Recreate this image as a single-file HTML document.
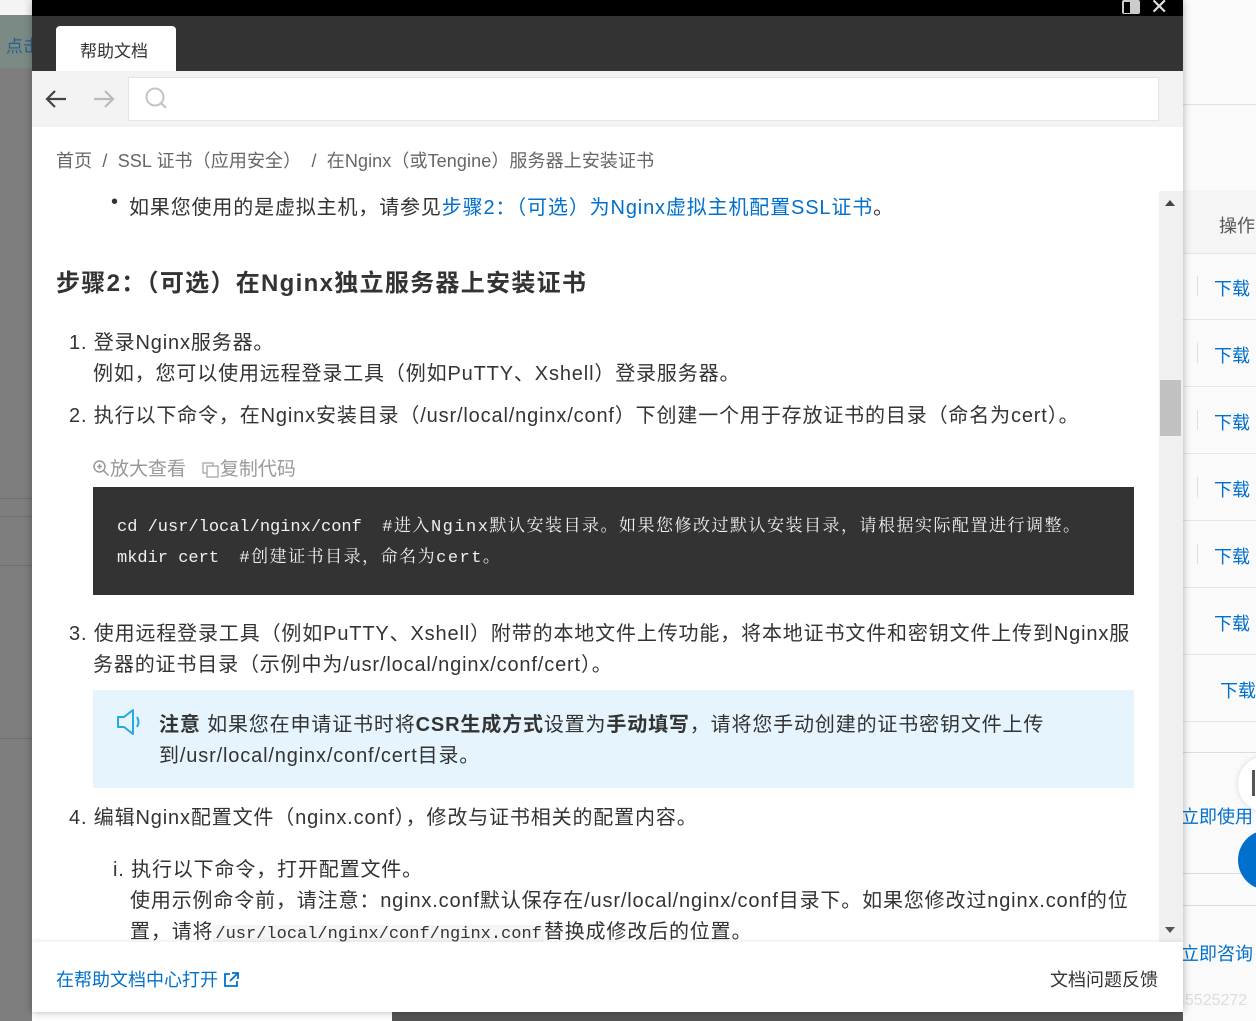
<!DOCTYPE html>
<html><head><meta charset="utf-8">
<style>
*{margin:0;padding:0;box-sizing:border-box}
body{width:1256px;height:1021px;overflow:hidden;position:relative;background:#fff;font-family:"Liberation Sans","Noto Sans CJK SC",sans-serif;color:#333}
.abs{position:absolute}
.blue{color:#0070cc}
.mono{font-family:"Liberation Mono","Noto Sans CJK SC",monospace}
.t{font-size:20px;letter-spacing:0.85px;white-space:nowrap}
</style></head><body>
<div class="abs" style="left:0;top:0;width:32px;height:1021px;background:#7e7e7e"></div>
<div class="abs" style="left:0;top:0;width:32px;height:15px;background:#f4f4f4"></div>
<div class="abs" style="left:0;top:15px;width:32px;height:53px;background:#7c8a86"></div>
<div class="abs" style="left:6px;top:32px;font-size:17px;color:#2b5f8a">点击</div>
<div class="abs" style="left:0;top:498px;width:32px;height:1px;background:#6e6e6e"></div>
<div class="abs" style="left:0;top:516px;width:32px;height:1px;background:#6e6e6e"></div>
<div class="abs" style="left:0;top:565px;width:32px;height:1px;background:#6e6e6e"></div>
<div class="abs" style="left:0;top:738px;width:32px;height:1px;background:#6e6e6e"></div>
<div class="abs" style="left:1183px;top:0;width:73px;height:1021px;background:#fafafa"></div>
<div class="abs" style="left:1183px;top:190px;width:73px;height:63px;background:#f5f5f5"></div>
<div class="abs" style="left:1219px;top:212px;font-size:18px;color:#555">操作</div>
<div class="abs" style="left:1183px;top:104px;width:73px;height:1px;background:#e0e0e0"></div>
<div class="abs" style="left:1183px;top:253px;width:73px;height:1px;background:#e5e5e5"></div>
<div class="abs" style="left:1183px;top:319px;width:73px;height:1px;background:#e5e5e5"></div>
<div class="abs" style="left:1183px;top:386px;width:73px;height:1px;background:#e5e5e5"></div>
<div class="abs" style="left:1183px;top:453px;width:73px;height:1px;background:#e5e5e5"></div>
<div class="abs" style="left:1183px;top:520px;width:73px;height:1px;background:#e5e5e5"></div>
<div class="abs" style="left:1183px;top:587px;width:73px;height:1px;background:#e5e5e5"></div>
<div class="abs" style="left:1183px;top:654px;width:73px;height:1px;background:#e5e5e5"></div>
<div class="abs" style="left:1183px;top:721px;width:73px;height:1px;background:#e5e5e5"></div>
<div class="abs" style="left:1183px;top:752px;width:73px;height:1px;background:#ddd"></div>
<div class="abs" style="left:1183px;top:873px;width:73px;height:1px;background:#ddd"></div>
<div class="abs" style="left:1183px;top:905px;width:73px;height:1px;background:#ddd"></div>
<div class="abs blue" style="left:1214px;top:275px;font-size:18px">下载</div>
<div class="abs blue" style="left:1214px;top:342px;font-size:18px">下载</div>
<div class="abs blue" style="left:1214px;top:409px;font-size:18px">下载</div>
<div class="abs blue" style="left:1214px;top:476px;font-size:18px">下载</div>
<div class="abs blue" style="left:1214px;top:543px;font-size:18px">下载</div>
<div class="abs blue" style="left:1214px;top:610px;font-size:18px">下载</div>
<div class="abs blue" style="left:1220px;top:677px;font-size:18px">下载</div>
<div class="abs" style="left:1197px;top:276px;width:1px;height:20px;background:#ddd"></div>
<div class="abs" style="left:1197px;top:343px;width:1px;height:20px;background:#ddd"></div>
<div class="abs" style="left:1197px;top:410px;width:1px;height:20px;background:#ddd"></div>
<div class="abs" style="left:1197px;top:477px;width:1px;height:20px;background:#ddd"></div>
<div class="abs" style="left:1197px;top:544px;width:1px;height:20px;background:#ddd"></div>
<div class="abs" style="left:1238px;top:756px;width:56px;height:56px;border-radius:50%;background:#fff;box-shadow:0 0 6px rgba(0,0,0,.15)"></div>
<div class="abs" style="left:1252px;top:770px;width:3px;height:26px;background:#555"></div>
<div class="abs blue" style="left:1181px;top:803px;font-size:18px">立即使用</div>
<div class="abs" style="left:1238px;top:830px;width:60px;height:60px;border-radius:50%;background:#0070cc"></div>
<div class="abs blue" style="left:1181px;top:940px;font-size:18px">立即咨询</div>
<div class="abs" style="left:975px;top:992px;font-size:16px;color:#ddd">https://blog.csdn.net/weixin_45525272</div>
<div class="abs" style="left:392px;top:1012px;width:791px;height:9px;background:#555"></div>

<div class="abs" style="left:32px;top:0;width:1151px;height:1012px;background:#fff;box-shadow:0 0 8px rgba(0,0,0,.3);overflow:hidden">
  <div class="abs" style="left:0;top:0;width:1151px;height:16px;background:#000"></div>
  <div class="abs" style="left:1090px;top:0;width:18px;height:14px;background:#ccc;border-radius:2px"></div>
  <div class="abs" style="left:1092px;top:2px;width:6px;height:11px;background:#000"></div>
  <div class="abs" style="left:1118px;top:-6px;font-size:22px;color:#ddd">✕</div>
  <div class="abs" style="left:0;top:16px;width:1151px;height:55px;background:#333"></div>
  <div class="abs" style="left:24px;top:26px;width:120px;height:45px;background:#fff;border-radius:4px 4px 0 0"></div>
  <div class="abs" style="left:48px;top:37px;font-size:17px;color:#333">帮助文档</div>
  <div class="abs" style="left:0;top:71px;width:1151px;height:56px;background:#f3f3f3"></div>
  <svg class="abs" style="left:12px;top:87px" width="24" height="24" viewBox="0 0 24 24"><path d="M22 12H3M11 4l-8 8 8 8" fill="none" stroke="#444" stroke-width="2.2"/></svg>
  <svg class="abs" style="left:60px;top:87px" width="24" height="24" viewBox="0 0 24 24"><path d="M2 12h19M13 4l8 8-8 8" fill="none" stroke="#bbb" stroke-width="2.2"/></svg>
  <div class="abs" style="left:96px;top:77px;width:1031px;height:44px;background:#fff;border:1px solid #e4e4e4"></div>
  <svg class="abs" style="left:112px;top:86px" width="26" height="26" viewBox="0 0 26 26"><circle cx="11" cy="11" r="8.5" fill="none" stroke="#c4c4c4" stroke-width="2"/><path d="M17 17l5 5" stroke="#c4c4c4" stroke-width="2.2"/></svg>
  <div class="abs" style="left:24px;top:147px;font-size:18px;letter-spacing:0.1px;color:#666;white-space:nowrap">首页 &nbsp;/ &nbsp;SSL 证书（应用安全） &nbsp;/ &nbsp;在Nginx（或Tengine）服务器上安装证书</div>

  <div class="abs" style="left:0;top:188px;width:1127px;height:754px;overflow:hidden;color:#333">
    <div class="abs t" style="left:97px;top:3px"><span style="position:absolute;left:-18px;top:0">•</span>如果您使用的是虚拟主机，请参见<span class="blue">步骤2：（可选）为Nginx虚拟主机配置SSL证书</span>。</div>
    <div class="abs" style="left:24px;top:75px;font-size:24px;letter-spacing:1.3px;font-weight:bold;color:#333;white-space:nowrap">步骤2：（可选）在Nginx独立服务器上安装证书</div>
    <div class="abs t" style="left:37px;top:138px">1. 登录Nginx服务器。</div>
    <div class="abs t" style="left:61px;top:169px">例如，您可以使用远程登录工具（例如PuTTY、Xshell）登录服务器。</div>
    <div class="abs t" style="left:37px;top:211px">2. 执行以下命令，在Nginx安装目录（/usr/local/nginx/conf）下创建一个用于存放证书的目录（命名为cert）。</div>
    <div class="abs" style="left:60px;top:266px;font-size:19px;color:#999;white-space:nowrap">
      <svg width="18" height="18" viewBox="0 0 18 18" style="vertical-align:-2px"><circle cx="7.5" cy="7.5" r="5.5" fill="none" stroke="#999" stroke-width="1.5"/><path d="M11.5 11.5l5 5M5 7.5h5M7.5 5v5" stroke="#999" stroke-width="1.5"/></svg>放大查看 &nbsp;&nbsp;<svg width="18" height="18" viewBox="0 0 18 18" style="vertical-align:-3px"><rect x="1" y="3" width="10" height="10" fill="none" stroke="#aaa" stroke-width="1.4"/><rect x="5" y="6" width="11" height="11" fill="#fff" stroke="#aaa" stroke-width="1.4"/></svg>复制代码</div>
    <div class="abs" style="left:61px;top:299px;width:1041px;height:108px;background:#333"></div>
    <div class="abs" style="left:85px;top:324px;font-size:17px;color:#f0f0f0;white-space:pre;line-height:31px;font-family:'Liberation Mono','Noto Serif CJK SC',monospace">cd /usr/local/nginx/conf  <span style="letter-spacing:1.5px">#进入Nginx默认安装目录。如果您修改过默认安装目录，请根据实际配置进行调整。</span>
mkdir cert  <span style="letter-spacing:1.5px">#创建证书目录，命名为cert。</span></div>
    <div class="abs t" style="left:37px;top:429px">3. 使用远程登录工具（例如PuTTY、Xshell）附带的本地文件上传功能，将本地证书文件和密钥文件上传到Nginx服</div>
    <div class="abs t" style="left:61px;top:460px">务器的证书目录（示例中为/usr/local/nginx/conf/cert）。</div>
    <div class="abs" style="left:61px;top:502px;width:1041px;height:98px;background:#e6f5fd"></div>
    <svg class="abs" style="left:84px;top:520px" width="30" height="28" viewBox="0 0 30 28"><path d="M2 9h6l9-7v24l-9-7H2z" fill="none" stroke="#29a8e0" stroke-width="2" stroke-linejoin="round"/><path d="M21 9q3 5 0 10" fill="none" stroke="#29a8e0" stroke-width="2"/></svg>
    <div class="abs t" style="left:127px;top:520px"><b>注意</b> 如果您在申请证书时将<b>CSR生成方式</b>设置为<b>手动填写</b>，请将您手动创建的证书密钥文件上传</div>
    <div class="abs t" style="left:127px;top:551px">到/usr/local/nginx/conf/cert目录。</div>
    <div class="abs t" style="left:37px;top:613px">4. 编辑Nginx配置文件（nginx.conf），修改与证书相关的配置内容。</div>
    <div class="abs t" style="left:81px;top:665px">i. 执行以下命令，打开配置文件。</div>
    <div class="abs t" style="left:98px;top:696px">使用示例命令前，请注意：nginx.conf默认保存在/usr/local/nginx/conf目录下。如果您修改过nginx.conf的位</div>
    <div class="abs t" style="left:98px;top:727px">置，请将<span class="mono" style="font-size:17px;letter-spacing:0;background:#f5f5f5;padding:0 2px">/usr/local/nginx/conf/nginx.conf</span>替换成修改后的位置。</div>
  </div>
  <div class="abs" style="left:1127px;top:191px;width:24px;height:751px;background:#f0f0f0"></div>
  <div class="abs" style="left:1133px;top:200px;width:0;height:0;border-left:5px solid transparent;border-right:5px solid transparent;border-bottom:6px solid #444"></div>
  <div class="abs" style="left:1128px;top:380px;width:21px;height:56px;background:#c1c1c1"></div>
  <div class="abs" style="left:1133px;top:927px;width:0;height:0;border-left:5px solid transparent;border-right:5px solid transparent;border-top:6px solid #555"></div>
  <div class="abs" style="left:0;top:942px;width:1151px;height:70px;background:#fff;box-shadow:0 -2px 4px rgba(0,0,0,.06)"></div>
  <div class="abs blue" style="left:24px;top:966px;font-size:18px;white-space:nowrap">在帮助文档中心打开 <svg width="16" height="16" viewBox="0 0 16 16" style="vertical-align:-2px"><path d="M7 2H2v12h12V9M9 1h6v6M15 1L7 9" fill="none" stroke="#0070cc" stroke-width="1.8"/></svg></div>
  <div class="abs" style="left:1018px;top:966px;font-size:18px;color:#333">文档问题反馈</div>
</div>
</body></html>
